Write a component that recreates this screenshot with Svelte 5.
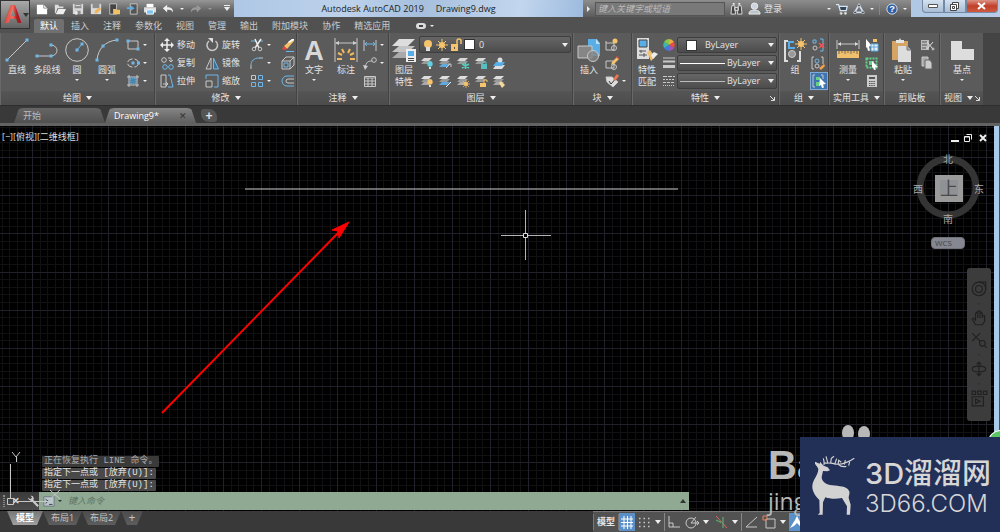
<script>
	const dot = (x, y) =>
		`<rect x="${x - 1.5}" y="${y - 1.5}" width="3" height="3" fill="#6fb7e8" stroke="none"/>`;
	const sheets = (top, low) =>
		`<g stroke="none"><path d="M4 8h8l-3 3H1z" fill="${low}"/><path d="M4 5h8l-3 3H1z" fill="#999"/><path d="M4 2h8L9 5H1z" fill="${top}"/></g>`;

	const icons = {
		line: `<path d="M1 23 22 2"/>${dot(2, 22)}${dot(22, 2)}`,
		polyline: `<path d="M1 18h15M16 7a6 5.5 0 0 1 0 11"/>${dot(2, 18)}${dot(16, 18)}${dot(16, 7)}`,
		circle: `<circle cx="12" cy="12" r="11.3"/><path d="m12 12 5-6" stroke="#6fb7e8"/>${dot(12, 12)}${dot(17, 6)}`,
		arc: `<path d="M2 22C3 11 10 3 22 2"/>${dot(2, 22)}${dot(8, 8)}${dot(22, 2)}`,
		rect: `<path d="M2 3h10v8H2z"/>${dot(2, 3)}${dot(12, 11)}`,
		ellipse: `<ellipse cx="7" cy="7" rx="5.5" ry="4.2" stroke-dasharray="6 2"/>${dot(7, 7)}${dot(12.5, 7)}`,
		hatch: `<path d="M1 3h12M1 11h12M3 1v12M11 1v12"/><path d="M4 4h6v6H4z" fill="#4c86ad" stroke="#6fb7e8" stroke-dasharray="1 1"/>`,
		move: `<path d="M7 2v10M2 7h10" stroke="#eee" stroke-width="1.5"/><path d="m7 0 3 3H4zM7 14l3-3H4zM0 7l3-3v6zM14 7l-3-3v6z" fill="#eee" stroke="none"/>`,
		rotate: `<path d="M10.5 3a5.3 5.3 0 1 1-6.5 0" stroke-width="1.5"/><path d="M3 0h5v5z" fill="#ddd" stroke="none"/>`,
		copy: `<circle cx="4" cy="4" r="2.3"/><path d="M8 2h3v3M9 4l2 2 2-2"/><g stroke="#6fb7e8"><circle cx="5" cy="11" r="2.3"/><circle cx="11" cy="11" r="2.3"/></g>`,
		mirror: `<path d="M6 2v11H1z"/><path d="M8.500 2v11h5z" stroke="#6fb7e8" fill="#3f7196"/>`,
		stretch: `<path d="M1 1h5v12H1zM3 10h5M6 8l2 2-2 2"/><path d="M8 1h2l3 12H8" stroke="#6fb7e8"/>`,
		scale: `<path d="M1 5V1h12v12H9" stroke="#6fb7e8"/><path d="M1 7h6v6H1z"/>`,
		trim: `<path d="M1 3h5M9 3h4" stroke="#6fb7e8"/><path d="m5 1 4 9M11 1 5 10" stroke="#eee" stroke-width="1.5"/><circle cx="4" cy="11" r="1.8"/><circle cx="10" cy="11" r="1.8"/>`,
		fillet: `<path d="M1 13V9M9 2h4"/><path d="M1 9c0-4 3-7 8-7" stroke="#6fb7e8"/>`,
		array: `<g stroke="#6fb7e8"><path d="M8.500 1.500h4v4h-4zM1.500 8.500h4v4h-4zM8.500 8.500h4v4h-4z"/></g><path d="M1.500 1.500h4v4h-4z"/>`,
		erase: `<path d="m3 8 3 3 7-8V1h-2z" fill="#f3c06a" stroke="none"/><path d="m3 8 3 3-2 1-3-1z" fill="#e9453c" stroke="none"/><path d="m7 4 4-3h2v1L8 5z" fill="#fff" stroke="none"/><path d="M5 13.500h8" stroke="#6fb7e8"/>`,
		explode: `<path d="M1 5h8v8H1zM1 5l4-4h8l-4 4M9 13l4-4V1"/><path d="M3 7h4v4H3z" stroke="#6fb7e8"/>`,
		offset: `<path d="M13 2H6a5 5 0 0 0 0 10h7" stroke="#6fb7e8"/><path d="M13 5H7a2 2 0 0 0 0 4h6"/>`,
		text: `<text x="12" y="22" text-anchor="middle" font-family="Liberation Sans" font-size="27" font-weight="bold" fill="#d8d8d8" stroke="none">A</text>`,
		dimension: `<path d="M1 0v24M23 0v24M2 5h20"/><path d="m1 5 4-2v4zM23 5l-4-2v4z" fill="#ccc" stroke="none"/><path d="m4 15 4 2M8 11l2 4M16 11l-2 4M20 15l-4 2M3 21h5M21 21h-5" stroke="#f0b85f" stroke-width="2"/>`,
		linear: `<path d="M1 2v11M13 2v11"/><path d="M2 6h10M4 4 2 6l2 2M10 4l2 2-2 2" stroke="#6fb7e8"/>`,
		leader: `<path d="M2 12C3 6 5 5 9 5"/><circle cx="11" cy="4" r="2.300"/><path d="m0 9 2 5 3-4z" fill="#ccc" stroke="none"/>`,
		table: `<path d="M1.500 2.500h11v10h-11zM1.500 4h11M1.500 7h11M1.500 10h11M5 4v8M9 4v8"/>`,
		layers: `<g stroke="none"><path d="M7 14h16l-7 6H0z" fill="#aaa"/><path d="M7 8h16l-7 6H0z" fill="#c4c4c4"/><path d="M7 1h16l-7 7H0z" fill="#ddd"/><path d="M14 11h10v13H14z" fill="#eee"/><path d="M16 13h6v5h-6z" fill="#58aee8"/><path d="M16 20h6v1h-6zM16 22h6v1h-6z" fill="#444"/></g>`,
		layerOff: `${sheets('#d8d8d8', '#5d5d5d')}<circle cx="10" cy="8" r="2.700" fill="#5fd0e0" stroke="none"/><path d="M9 11h2v2H9z" fill="#ddd" stroke="none"/>`,
		layerIso: `${sheets('#ddd', '#5fa9dd')}<path d="m8 12 4-4M10 8h3v3"/>`,
		layerFreeze: `${sheets('#d8d8d8', '#5d5d5d')}<path d="M9.500 6v7M6 8l7 4M6 12l7-4" stroke="#58cdbd" stroke-width="1.500"/>`,
		layerLock: `${sheets('#d8d8d8', '#5d5d5d')}<path d="M7 8h6v5H7z" fill="#58bfc0" stroke="none"/><path d="M8 8V6h4v2" stroke="#58bfc0"/>`,
		layerMake: `<path d="M4 9h9l-3 4H1z" fill="#ddd" stroke="none"/><path d="M4 6h9l-3 4H1z" fill="#58aee8" stroke="none"/><circle cx="8" cy="4" r="2.500" fill="#ddd" stroke="none"/>`,
		layerOn: `${sheets('#ddd', '#aaa')}<circle cx="10" cy="8" r="2.700" fill="#f4c36b" stroke="none"/><path d="M9 11h2v2H9z" fill="#ddd" stroke="none"/>`,
		layerUniso: `${sheets('#ddd', '#5fa9dd')}<path d="m8 13 5-5" stroke="#eee"/>`,
		layerThaw: `${sheets('#ddd', '#aaa')}<circle cx="10" cy="10" r="2" fill="#f4c36b" stroke="none"/><path d="M10 6v8M6 10h8M7 7l6 6M7 13l6-6" stroke="#f4c36b" stroke-width=".7"/>`,
		layerUnlock: `${sheets('#d8d8d8', '#5d5d5d')}<path d="M6 9h6v4H6z" fill="#f4c36b" stroke="none"/><path d="M10 9V6h3v2" stroke="#f4c36b"/>`,
		layerMatch: `${sheets('#ddd', '#aaa')}<path d="m7 9 2-2 4 4-3 3z" fill="#f4d79a" stroke="none"/>`,
		bulb: `<circle cx="6" cy="5" r="4" fill="#f4c36b" stroke="none"/><path d="M4 8h4v4H4z" fill="#ddd" stroke="none"/>`,
		sun: `<circle cx="6" cy="6" r="3" fill="#f4c36b" stroke="none"/><path d="M6 0v12M0 6h12M2 2l8 8M2 10l8-8" stroke="#f4c36b"/>`,
		unlock: `<path d="M1 5h7v7H1z" fill="#f4c36b" stroke="none"/><path d="M7 5V2a2 2 0 0 1 4 0v3" stroke="#f4c36b" stroke-width="1.500"/><path d="M4 8h1v2H4z" fill="#555" stroke="none"/>`,
		insert: `<path d="M11 1h9l3 4v13H11z" fill="#5aaee6" stroke="none"/><path d="M19 1v5h4" fill="#bde0f8" stroke="none"/><path d="M1 8h14v12H1z" fill="#868686"/><circle cx="16" cy="18" r="5.500" fill="#868686" fill-opacity=".8"/>`,
		blockNew: `<path d="M1 5h8v7H1zM1 3v2"/><circle cx="9" cy="10" r="2.500"/><circle cx="10" cy="3" r="2.500" fill="#f4c36b" stroke="none"/>`,
		blockEdit: `<path d="M1 5h8v7H1z"/><circle cx="9" cy="11" r="2.500"/><path d="m6 9 1-3 5-5 2 2-5 5z" fill="#f4c36b" stroke="none"/><path d="m11 1 1-1 2 2-1 1z" fill="#e9453c" stroke="none"/>`,
		attribute: `<path d="M1 3h6l6 5-5 5-6-5z" fill="#ddd"/><path d="m4 7 2 3 7-8" stroke="#333"/><path d="m8 5 4-5 2 2-4 5z" fill="#ed7455" stroke="none"/>`,
		match: `<path d="M2 0h12v21H2z" fill="#ddd" stroke="none"/><path d="M4 2h8v7H4z" fill="#5aaee6" stroke="#444"/><path d="M4 13h7M4 17h8M6 12v3M9 15v4" stroke="#555"/><path d="m12 14 3-2 5 7-4 4z" fill="#f1c06d" stroke="none"/><path d="m16 17 3-3 4 2-5 5z" fill="#eee" stroke="none"/>`,
		wheel: `<g stroke="none"><path d="M7 7V1a6 6 0 0 1 5 3z" fill="#f5a742"/><path d="m7 7 5-3a6 6 0 0 1 0 6z" fill="#e94e43"/><path d="m7 7 5 3a6 6 0 0 1-5 3z" fill="#a452c2"/><path d="M7 7v6a6 6 0 0 1-5-3z" fill="#4479dc"/><path d="m7 7-5 3a6 6 0 0 1 0-6z" fill="#39b7b0"/><path d="M7 7 2 4a6 6 0 0 1 5-3z" fill="#86c847"/></g>`,
		weights: `<path d="M1 2h12" /><path d="M1 5.500h12" stroke-width="2"/><path d="M1 10.500h12" stroke-width="3"/>`,
		linetypes: `<path d="M1 2.500h12" stroke-dasharray="4 1"/><path d="M1 5.500h12" stroke-dasharray="2 1"/><path d="M1 8.500h12" stroke-dasharray="3 1"/><path d="M1 11.500h12" stroke-dasharray="1 1"/>`,
		group: `<path d="M5 3H2v20h3M14 23h3V13" stroke="#ddd" stroke-width="2"/><path d="M11 4H6v6h6" stroke="#58aee8" stroke-width="2"/><circle cx="9" cy="16" r="3.500" fill="#999"/><circle cx="18" cy="6" r="3" fill="#f4c36b" stroke="none"/><path d="M18 0v12M12 6h12M14 2l8 8M14 10l8-8" stroke="#f4c36b"/>`,
		ungroup: `<path d="M2 2h3v3H2zM9 1h3v12H9" stroke="#6fb7e8"/><circle cx="4" cy="10" r="2"/><path d="m8 5 5 5M13 5l-5 5" stroke="#e55" stroke-width="1.500"/>`,
		groupEdit: `<path d="M3 1H1v12h2M10 1h2v7"/><circle cx="6" cy="5" r="2" stroke="#6fb7e8"/><circle cx="6" cy="10" r="2"/><path d="m8 12 5-4 1 2-4 4z" fill="#f1a14f" stroke="none"/>`,
		groupSelect: `<path d="M3 1H1v12h2M9 1h2v4"/><path d="M4 3h4v3H4zM4 8h3v4H4z" fill="#65d184" stroke="none"/><path d="m8 4 6 6-3 .5 1 3-2 .5-1-3-2 1z" fill="#fff" stroke="none"/>`,
		measure: `<path d="M1 2v9M23 2v9M2 6h20"/><path d="m2 6 3-2v4zM22 6l-3-2v4z" fill="#ddd" stroke="none"/><path d="M1 13h22v7H1z" fill="#f1c06d" stroke="none"/><path d="M3 13v3M6 13v2M9 13v3M12 13v2M15 13v3M18 13v2M21 13v3" stroke="#765"/>`,
		quick: `<path d="m1 1 6 7-3 .5 1 4-2 .5-1-4-1 1z" fill="#fff" stroke="none"/><path d="M6 6h7v7H6z" fill="#eee" stroke="#58aee8"/><path d="M9 6v7M6 9h7" stroke="#58aee8"/><path d="M8 1h4v3H8z" fill="#f4c36b" stroke="none"/>`,
		selectAll: `<path d="M1.500 2.500h10v9h-10z" stroke="#62d48a" stroke-width="2" stroke-dasharray="2 1"/><path d="M4 5h5v4H4z" fill="#62d48a" stroke="none"/><path d="m7 5 6 6-3 .5 1 2-2 .5-1-3-1 1z" fill="#fff" stroke="none"/>`,
		calc: `<path d="M2 1h10v12H2z" fill="#ccc" stroke="none"/><path d="M4 3h6v2H4z" fill="#555" stroke="none"/><path d="M4 7.500h6M4 9.500h6M4 11.500h6" stroke="#555" stroke-dasharray="1.500 .7"/>`,
		paste: `<path d="M1 3h16v19H1z" fill="#d5a465" stroke="none"/><path d="M5 2h3l1-2 1 2h3v3H5z" fill="#e4e4e4" stroke="none"/><path d="M7 8h9l4 4v12H7z" fill="#ddd" stroke="none"/><path d="M16 8v4h4" fill="#aaa" stroke="#777"/>`,
		cut: `<path d="M1 2h8v10H1z" fill="#bbb" stroke="none"/><path d="M2 4h5M2 7h5M2 10h4" stroke="#555"/><path d="m7 4 6 7M13 4l-6 7" stroke="#ddd"/><circle cx="13" cy="11" r="1"/>`,
		copyClip: `<path d="M2 1h6v9H2z" fill="#aaa"/><path d="M5 4h5l2 3v6H5z" fill="#ccc" stroke="#666"/>`,
		base: `<path d="M1 3h11v8h12v11H1z" fill="#ddd" stroke="none"/>`,
		file: `<path d="M1 2h8l4 4v7H1z" fill="#fff" stroke="none"/><path d="M9 2v4h4" stroke="#888"/>`,
		open: `<path d="M1 2h4l1 2h5v2H4l-2 6H1z" fill="#ddd" stroke="none"/><path d="M5 7h9l-3 6H2z" fill="#eee" stroke="none"/>`,
		save: `<path d="M1 1h12v12H1z" fill="#d9d9d9" stroke="none"/><path d="M3 1h8v5H3zM4 9h6v4H4z" fill="#8c8c8c" stroke="none"/><path d="M4 3h6M4 10h2v3H4z" fill="#eee" stroke="#eee"/>`,
		saveAs: `<path d="M1 1h12v12H1z" fill="#d9d9d9" stroke="none"/><path d="M3 1h8v5H3z" fill="#8c8c8c" stroke="none"/><path d="m5 12 1-3 5-4 2 2-5 5z" fill="#f0b354" stroke="none"/>`,
		mobile: `<path d="M2 1h8v12H2z" fill="#444" stroke="#ccc"/><path d="M6 7h3l1 1h4v5H6z" fill="#f0c265" stroke="none"/>`,
		mobileSave: `<path d="M5 1h8v12H5z" fill="#555" stroke="#ccc"/><path d="M1 5h5V3l4 3-4 3V7H1z" fill="#58aee8" stroke="none"/>`,
		print: `<path d="M3 1h8v4H3z" fill="#fff" stroke="none"/><path d="M0 5h14v6H0z" fill="#ddd" stroke="none"/><path d="M3 8h8v5H3z" fill="#7cc2ef" stroke="#fff"/>`,
		undo: `<path d="m1 6 5-4v3c5 0 7 2 7 6-2-3-4-3-7-3v3z" fill="#eee" stroke="none"/>`,
		redo: `<path d="M13 6 8 2v3c-5 0-7 2-7 6 2-3 4-3 7-3v3z" fill="#999" stroke="none"/>`,
		find: `<path d="M2 4h3l1 9H1zM9 4h3l1 9H8zM5 6h4v3H5z" fill="#444" stroke="#ddd"/><path d="M3 2h2M9 2h2" stroke="#eee" stroke-width="2"/>`,
		user: `<circle cx="7" cy="4.500" r="3.500" fill="#ccd4dd" stroke="#eee"/><path d="M1 13c0-4 3-4 6-4s6 0 6 4z" fill="#bbc3cc" stroke="#eee"/>`,
		cart: `<path d="M0 2h3l2 7h7l1-5H4" stroke="#d9e6f5" stroke-width="1.500" fill="#345"/><circle cx="6" cy="12" r="1.300" fill="#eee"/><circle cx="11" cy="12" r="1.300" fill="#eee"/>`,
		share: `<path d="m7 2 5 9H2z" stroke="#cfe0f4" stroke-width="2"/><circle cx="7" cy="3" r="1.500" fill="#345"/><circle cx="2.500" cy="11" r="1.500" fill="#345"/><circle cx="11.500" cy="11" r="1.500" fill="#345"/>`,
		help: `<circle cx="7" cy="7" r="6" fill="#2c5fa8" stroke="#eee"/><text x="7" y="11" text-anchor="middle" font-family="Liberation Sans" font-weight="bold" font-size="11" fill="#fff" stroke="none">?</text>`,
		grid: `<path d="M1 4h12M1 7.500h12M1 11h12M4 1v13M7.500 1v13M11 1v13" stroke="#fff"/>`,
		snap: `<path d="M2 3.500h11M2 7.500h11M2 11.500h11" stroke-width="1.500" stroke-dasharray="1.500 3"/>`,
		ortho: `<path d="M2 1v11h11M2 8h4v4"/>`,
		polar: `<circle cx="6" cy="8" r="5"/><path d="M6 8h7M6 8l5-6M12 6l2 2-2 2"/>`,
		iso: `<path d="m2 1 11 12" stroke="#e06666"/><path d="M2 5 7 7.500M9 2v11" stroke="#58bf72"/>`,
		track: `<path d="M13 2 2 12h11"/>`,
		osnap: `<path d="M4 4h9v9H4z"/><path d="M1 1h4v4H1z" stroke="#e8845c"/>`,
		person: `<path d="m7 1 2 4 5 8-4-2-3-3-3 3-4 2 5-8z" fill="#fff" stroke="none"/>`,
		orbit: `<path d="M7 1v12M5 3l2-2 2 2M5 11l2 2 2-2"/><ellipse cx="7" cy="7" rx="6" ry="2.500"/>`,
		pan: `<path d="M4 13 1 8l1-1 2 2V3l1-1 1 1V1l2 0v2l1-1 1 1v2l2 0v5l-2 3zM6 3v4M8 3v4M10 4v3"/>`,
		zoom: `<path d="m1 1 7 7M8 1 1 8"/><circle cx="10" cy="10" r="2.500"/><path d="m12 12 2 2"/>`,
		steer: `<circle cx="7" cy="7" r="6"/><circle cx="7" cy="7" r="3"/><path d="M7 1h6v6"/>`,
		movie: `<path d="M1 1h3v3H1zM6 1h3v3H6zM11 1h3v3h-3zM1 6h10v8H1z"/><path d="m4 8 4 2-4 2z"/>`,
		wrench: `<path d="m5 5 8 8" stroke="#ccc" stroke-width="2.500"/><path d="M1 3a4 4 0 0 0 6 3 3 3 0 0 0-3-5l2 2-2 2z" fill="#ccc" stroke="none"/>`,
		prompt: `<path d="M1 2h12v11H1z" fill="#b9c3cb" stroke="#6c747b"/><path d="m3 5 3 2-3 3M7 11h4" stroke="#2e3338"/>`
	};

	const quickAccess = [
		['file', '新建'],
		['open', '打开'],
		['save', '保存'],
		['saveAs', '另存为'],
		['mobile', '从移动设备打开'],
		['mobileSave', '保存到移动设备'],
		['print', '打印']
	];
	const menus = ['默认', '插入', '注释', '参数化', '视图', '管理', '输出', '附加模块', '协作', '精选应用'];
	const layerTools = [
		'layerOff', 'layerIso', 'layerFreeze', 'layerLock', 'layerMake',
		'layerOn', 'layerUniso', 'layerThaw', 'layerUnlock', 'layerMatch'
	];
	const history = ['正在恢复执行 LINE 命令。', '指定下一点或 [放弃(U)]:', '指定下一点或 [放弃(U)]:'];

	// drawing grid: a bright line on every fifth step
	const step = 7.63;
	function gridPath(start, vertical, major) {
		let d = '';
		for (let i = 0; i < 400; i++) {
			if ((i % 5 === 0) !== major) continue;
			const p = Math.round(start + i * step) + 0.5;
			d += vertical ? `M${p} 0V3000` : `M0 ${p}H3000`;
		}
		return d;
	}
	const minorGrid = gridPath(-6, true, false) + gridPath(-7, false, false);
	const majorGrid = gridPath(-6, true, true) + gridPath(-7, false, true);

	let activeMenu = $state('默认');
	let command = $state('');
</script>

{#snippet icon(name, size = 14, box = size)}
	<svg width={size} height={size} viewBox="0 0 {box} {box}" fill="none" stroke="#c8c8c8" aria-hidden="true">
		{@html icons[name]}
	</svg>
{/snippet}

{#snippet big(name, label, caret = false, second = '')}
	<button class="big">
		{@render icon(name, 24)}
		<span>{label}</span>
		{#if second}<span>{second}</span>{/if}
		{#if caret}<i class="caret tiny"></i>{/if}
	</button>
{/snippet}

{#snippet small(name, label = '', caret = false)}
	<button class="small" aria-label={label || name}>
		{@render icon(name)}
		{#if label}<span>{label}</span>{/if}
		{#if caret}<i class="caret tiny"></i>{/if}
	</button>
{/snippet}

{#snippet footer(label, caret = true, launcher = false)}
	<footer>
		<span>{label}</span>
		{#if caret}<i class="caret"></i>{/if}
		{#if launcher}
			<svg class="launcher" width="5" height="5" viewBox="0 0 5 5" stroke="#ddd" fill="none"><path d="m0 0 4 4M4.500 1v3.500H1" /></svg>
		{/if}
	</footer>
{/snippet}

<div class="app">
	<header>
		<div class="quick">
			{#each quickAccess as [name, label]}
				<button aria-label={label}>{@render icon(name, 12, 14)}</button>
			{/each}
			<button aria-label="放弃">{@render icon('undo', 12, 14)}</button>
			<i class="caret tiny"></i>
			<button aria-label="重做">{@render icon('redo', 12, 14)}</button>
			<i class="caret tiny dim"></i>
			<i class="caret bar"></i>
		</div>
		<div class="title"><span>Autodesk AutoCAD 2019</span><span>Drawing9.dwg</span></div>
		<div class="info">
			<i class="play"></i>
			<input type="text" placeholder="键入关键字或短语" aria-label="搜索" />
			<button aria-label="查找">{@render icon('find', 13, 14)}</button>
			<button class="login">{@render icon('user', 13, 14)}<span>登录</span></button>
			<i class="caret tiny push"></i>
			<button aria-label="应用商店">{@render icon('cart', 12, 14)}</button>
			<button aria-label="保持连接">{@render icon('share', 12, 14)}</button>
			<i class="caret tiny"></i>
			<button class="help" aria-label="帮助">{@render icon('help', 12, 14)}</button>
			<i class="caret tiny"></i>
		</div>
		<div class="frame">
			<button aria-label="最小化"><svg width="10" height="5" viewBox="0 0 10 5"><path d="M.5.500h9v3h-9z" fill="#fff" stroke="#555" /></svg></button>
			<button aria-label="还原"><svg width="9" height="9" viewBox="0 0 9 9" fill="#fff" stroke="#444"><path d="M2.500.500h6v6h-6z" /><path d="M.500 2.500h6v6h-6zM2.500 4.500h2v2h-2z" /></svg></button>
			<button class="close" aria-label="关闭"><svg width="9" height="8" viewBox="0 0 9 8" stroke="#fff" stroke-width="2"><path d="m1 1 7 6M8 1 1 7" /></svg></button>
		</div>
		<button class="logo" aria-label="应用程序菜单">
			<svg width="20" height="26" viewBox="0 0 20 26">
				<defs><linearGradient id="red" x2="1"><stop offset="0" stop-color="#e5463d" /><stop offset=".5" stop-color="#f06a5d" /><stop offset=".7" stop-color="#a71d1c" /></linearGradient></defs>
				<text x="10" y="21" text-anchor="middle" font-family="Liberation Sans" font-size="26" font-weight="bold" fill="url(#red)">A</text>
			</svg>
			<i class="caret dark"></i>
		</button>
	</header>

	<nav class="menus">
		{#each menus as menu}
			<button class:active={menu === activeMenu} onclick={() => (activeMenu = menu)}>{menu}</button>
		{/each}
		<button class="toggle" aria-label="最小化功能区"><i class="pill"></i><i class="caret tiny"></i></button>
	</nav>

	<div class="ribbon">
		<section class="draw">
			<div class="tools">
				{@render big('line', '直线')}
				{@render big('polyline', '多段线')}
				{@render big('circle', '圆', true)}
				{@render big('arc', '圆弧', true)}
				<div class="stack">
					{@render small('rect', '', true)}
					{@render small('ellipse', '', true)}
					{@render small('hatch', '', true)}
				</div>
			</div>
			{@render footer('绘图')}
		</section>
		<section class="modify">
			<div class="tools">
				<div class="stack">{@render small('move', '移动')}{@render small('copy', '复制')}{@render small('stretch', '拉伸')}</div>
				<div class="stack">{@render small('rotate', '旋转')}{@render small('mirror', '镜像')}{@render small('scale', '缩放')}</div>
				<div class="stack">{@render small('trim', '', true)}{@render small('fillet', '', true)}{@render small('array', '', true)}</div>
				<div class="stack">{@render small('erase')}{@render small('explode')}{@render small('offset')}</div>
			</div>
			{@render footer('修改')}
		</section>
		<section class="annotate">
			<div class="tools">
				{@render big('text', '文字', true)}
				{@render big('dimension', '标注')}
				<div class="stack">{@render small('linear', '', true)}{@render small('leader', '', true)}{@render small('table')}</div>
			</div>
			{@render footer('注释')}
		</section>
		<section class="layer">
			<div class="tools">
				{@render big('layers', '图层', false, '特性')}
				<div class="grow">
					<label class="combo">
						{@render icon('bulb', 12)}{@render icon('sun', 12)}{@render icon('unlock', 12)}
						<i class="swatch"></i>
						<select aria-label="图层"><option>0</option></select>
						<i class="caret"></i>
					</label>
					<div class="matrix">
						{#each layerTools as tool}{@render small(tool)}{/each}
					</div>
				</div>
			</div>
			{@render footer('图层')}
		</section>
		<section class="block">
			<div class="tools">
				{@render big('insert', '插入')}
				<div class="stack">{@render small('blockNew')}{@render small('blockEdit')}{@render small('attribute', '', true)}</div>
			</div>
			{@render footer('块')}
		</section>
		<section class="props">
			<div class="tools">
				{@render big('match', '特性', false, '匹配')}
				<div class="stack">{@render small('wheel')}{@render small('weights')}{@render small('linetypes')}</div>
				<div class="stack grow">
					<label class="combo"><i class="swatch wide"></i><select aria-label="对象颜色"><option>ByLayer</option></select><i class="caret"></i></label>
					<label class="combo"><i class="rule"></i><select aria-label="线宽"><option>ByLayer</option></select><i class="caret"></i></label>
					<label class="combo"><i class="rule thin"></i><select aria-label="线型"><option>ByLayer</option></select><i class="caret"></i></label>
				</div>
			</div>
			{@render footer('特性', true, true)}
		</section>
		<section class="group">
			<div class="tools">
				{@render big('group', '组')}
				<div class="stack">{@render small('ungroup')}{@render small('groupEdit')}<div class="pressed">{@render small('groupSelect')}</div></div>
			</div>
			{@render footer('组')}
		</section>
		<section class="utils">
			<div class="tools">
				{@render big('measure', '测量', true)}
				<div class="stack">{@render small('quick')}{@render small('selectAll')}{@render small('calc')}</div>
			</div>
			{@render footer('实用工具')}
		</section>
		<section class="clip">
			<div class="tools">
				{@render big('paste', '粘贴', true)}
				<div class="stack">{@render small('cut')}{@render small('copyClip')}</div>
			</div>
			{@render footer('剪贴板', false)}
		</section>
		<section class="view">
			<div class="tools">{@render big('base', '基点', true)}</div>
			{@render footer('视图', true, true)}
		</section>
	</div>

	<div class="files">
		<button class="file">开始</button>
		<button class="file current">Drawing9*<span class="x">✕</span></button>
		<button class="plus" aria-label="新图形">+</button>
	</div>

	<main>
		<svg class="drawing" width="100%" height="100%" fill="none">
			<path d={minorGrid} stroke="#111114" />
			<path d={majorGrid} stroke="#20212b" />
			<path d="M245 63h433" stroke="#c9c9c9" />
			<path d="M525.500 84v23M525.500 112v22M501 109.500h22M528 109.500h23" stroke="#b4b4b4" />
			<path d="M523.500 107.500h4v4h-4z" stroke="#ddd" />
			<path d="M162 287 339 106" stroke="#f00" stroke-width="2" />
			<path d="m349 96-17 8 6 1 1 7z" fill="#f00" stroke="#f00" />
		</svg>

		<div class="viewlabel">[−][俯视][二维线框]</div>
		<div class="childframe">
			<svg width="38" height="10" viewBox="0 0 38 10" stroke="#eee" fill="none"><path d="M2 8h8" stroke-width="2" /><path d="M17.500 1.500h5v5M15.500 3.500h5v5h-5zM15.500 4h5" /><path d="m31 2 6 6M37 2l-6 6" stroke-width="2" /></svg>
		</div>

		<svg class="cube" width="82" height="78" viewBox="0 0 82 78" text-anchor="middle">
			<circle cx="40" cy="37" r="28" fill="none" stroke="#343434" stroke-width="7" />
			<path d="M27 25h28v27H27z" fill="#9a9a9a" />
			<path d="M32 30h18v16H32z" fill="#8f9295" />
			<text x="41" y="45" font-size="18" fill="#4a4a4a">上</text>
			<g font-size="10" fill="#a9a9a9">
				<text x="40" y="13">北</text><text x="10" y="43">西</text><text x="71" y="43">东</text><text x="40" y="73">南</text>
			</g>
		</svg>
		<button class="wcs">WCS</button>

		<div class="navbar">
			<button aria-label="控制盘">{@render icon('steer', 17, 15)}</button>
			<i class="caret tiny dark"></i>
			<button aria-label="平移">{@render icon('pan', 17, 15)}</button>
			<button aria-label="缩放">{@render icon('zoom', 17, 15)}</button>
			<i class="caret tiny dark"></i>
			<button aria-label="动态观察">{@render icon('orbit', 17, 15)}</button>
			<i class="caret tiny dark"></i>
			<button aria-label="ShowMotion">{@render icon('movie', 17, 15)}</button>
		</div>

		<div class="history">
			{#each history as row}<span>{row}</span>{/each}
		</div>
		<div class="command">
			<div class="handle"><i class="grip"></i><b>✕</b>{@render icon('wrench', 12, 14)}</div>
			<label for="cmd">{@render icon('prompt', 12, 14)}<i class="caret tiny dark"></i></label>
			<input id="cmd" type="text" placeholder="键入命令" bind:value={command} />
			<i class="caret up"></i>
		</div>
		<svg class="ucs" width="64" height="60" viewBox="0 0 64 60" fill="none" stroke="#c4c8c4">
			<path d="M10.500 13v35M12 1l4 5 4-5M16.500 6v5M7.500 47.500h6v6h-6zM14 50.500h37M50 39l10 9M60 39l-10 9" />
		</svg>
	</main>

	<div class="bottom">
		<div class="layouts">
			<button class="current">模型</button>
			<button>布局1</button>
			<button>布局2</button>
			<button class="add" aria-label="新建布局">+</button>
		</div>
		<div class="status">
			<button class="space">模型</button>
			<button class="on" aria-label="栅格">{@render icon('grid')}</button>
			<button aria-label="捕捉">{@render icon('snap')}</button><i class="caret"></i>
			<button class="split" aria-label="正交">{@render icon('ortho')}</button>
			<button aria-label="极轴">{@render icon('polar')}</button><i class="caret"></i>
			<button aria-label="等轴测">{@render icon('iso')}</button><i class="caret"></i>
			<button class="split" aria-label="对象追踪">{@render icon('track')}</button>
			<button aria-label="对象捕捉">{@render icon('osnap')}</button><i class="caret"></i>
			<button class="on" aria-label="注释可见性">{@render icon('person')}</button>
		</div>
	</div>

	<div class="baidu">
		<svg width="34" height="18" viewBox="0 0 34 18" fill="#b8b8b8"><ellipse cx="8" cy="9" rx="6" ry="8" /><ellipse cx="24" cy="10" rx="6" ry="8" /></svg>
		<strong>Ba</strong>
		<span>jing</span>
	</div>
	<i class="ball"></i>
	<div class="mark">
		<svg width="50" height="62" viewBox="34 54 150 186" fill="#d2d2d2">
			<path d="M46 74l14 6 2-6 4 6 6 6 12 5 7 9-8 3-13-1-4 18c0 14 14 23 32 25 20 3 42 2 50 16 4 8-1 14-1 22l6 20-2 30h-10l1-25-11-18-4-7c-18 4-36 3-50-2l-7 15-1 37H54l6-5-1-39c-12-12-22-26-21-43 2-19 17-30 18-49-1-8-8-11-10-17z" />
			<path d="M73 84c1-8 0-14-2-20M73 78c8 1 16-1 26 1 20 7 38 3 65-15M84 76l-5-18M93 77l2-13 8-6M106 79l5-14M115 83l2-13 8 6M134 83l3-14M150 74l-3 12M116 82c8 8 16 8 24 6" fill="none" stroke="#d2d2d2" stroke-width="3.500" />
		</svg>
		<div><b>3D溜溜网</b><span>3D66.COM</span></div>
	</div>
</div>

<style>
	.app {
		position: relative;
		display: flex;
		flex-direction: column;
		height: 100vh;
		overflow: hidden;
		background: #393939;
		color: #e4e4e4;
		font: 9px/12px 'Open Sans', 'Noto Sans CJK SC', sans-serif;
	}
	:global(body) {
		margin: 0;
	}
	button,
	input,
	select {
		margin: 0;
		padding: 0;
		border: 0;
		background: none;
		color: inherit;
		font: inherit;
	}
	svg {
		display: block;
		flex: none;
		overflow: visible;
	}
	button {
		white-space: nowrap;
	}

	.caret {
		flex: none;
		width: 0;
		border: 3px solid transparent;
		border-top: 4px solid #eee;
		border-bottom: 0;
	}
	.caret.tiny {
		border-width: 2px;
		border-top-width: 2px;
		border-bottom: 0;
	}
	.caret.dark {
		border-top-color: #333;
	}
	.caret.dim {
		border-top-color: #999;
	}
	.caret.bar {
		position: relative;
		margin-left: 6px;
	}
	.caret.bar::before {
		content: '';
		position: absolute;
		left: -3px;
		top: -6px;
		width: 6px;
		height: 1px;
		background: #eee;
	}
	.caret.up {
		border-top: 0;
		border-bottom: 4px solid #333;
	}

	/* title bar */
	header {
		position: relative;
		display: flex;
		height: 17px;
		flex: none;
		background: linear-gradient(100deg, #a9c5e4 20%, #bdd1ea 35%, #a5bfdd 42%, #c2d6ee 52%, #9fbcdf 58%, #b5cbe6);
	}
	.quick,
	.info {
		display: flex;
		align-items: center;
		gap: 6px;
		background: linear-gradient(#969696, #666 60%, #5c5c5c);
	}
	.quick {
		padding: 0 4px 0 36px;
	}
	.title {
		display: flex;
		flex: 1;
		align-items: center;
		justify-content: center;
		gap: 12px;
		color: #222;
		white-space: nowrap;
	}
	.info {
		width: 328px;
		gap: 5px;
		background: linear-gradient(#8d8d8d, #5b5b5b);
	}
	.info input {
		width: 130px;
		height: 14px;
		box-sizing: border-box;
		padding: 0 2px;
		border: 1px solid #555;
		background: #797979;
		font-style: italic;
	}
	.info input::placeholder {
		color: #bbb;
	}
	.play {
		margin-left: 4px;
		border: 3px solid transparent;
		border-left: 3px solid #eee;
		border-right: 0;
	}
	.login {
		display: flex;
		align-items: center;
		gap: 3px;
	}
	.push {
		margin-left: auto;
	}
	.help {
		padding-left: 6px;
		border-left: 1px solid #888;
	}
	.info > :last-child {
		margin-right: 4px;
	}
	.frame {
		display: flex;
		width: 76px;
		height: 13px;
		padding: 0 2px 0 11px;
	}
	.frame button {
		display: grid;
		place-items: center;
		flex: 22;
		border: 1px solid #7489a3;
		border-top: 0;
		background: linear-gradient(#d4e1f0, #a9bdd5);
	}
	.frame button:first-child {
		border-bottom-left-radius: 4px;
	}
	.frame .close {
		flex: 34;
		border-bottom-right-radius: 4px;
		background: linear-gradient(#dc9385, #c0402a 50%, #cf5a40);
	}
	.logo {
		position: absolute;
		left: 0;
		top: 0;
		z-index: 1;
		display: flex;
		align-items: center;
		width: 30px;
		height: 29px;
		padding: 0 0 0 2px;
		border: 1px solid #333;
		background: linear-gradient(#a9a9a9, #636363);
	}

	/* ribbon tabs */
	.menus {
		display: flex;
		height: 16px;
		flex: none;
		align-items: flex-end;
		padding-left: 34px;
		background: #515151;
	}
	.menus button {
		height: 14px;
		padding: 0 7px;
		color: #ccc;
	}
	.menus .active {
		padding: 0 6px;
		border-radius: 2px 2px 0 0;
		background: #707070;
		color: #fff;
	}
	.menus .toggle {
		display: flex;
		align-items: center;
		gap: 4px;
		margin-left: 12px;
	}
	.pill {
		width: 4px;
		height: 2px;
		border: solid #ddd;
		border-width: 2px 3px;
		border-radius: 3px;
		background: #444;
	}

	/* ribbon */
	.ribbon {
		display: flex;
		height: 73px;
		flex: none;
		background: #444;
		border-bottom: 1px solid #2e2e2e;
		box-sizing: border-box;
	}
	section {
		display: flex;
		flex-direction: column;
		flex: none;
		box-sizing: border-box;
		border-right: 1px solid #444;
		border-left: 1px solid #686868;
		background: #5b5b5b;
	}
	.draw {
		width: 155px;
	}
	.modify {
		width: 142px;
	}
	.annotate {
		width: 92px;
	}
	.layer {
		width: 184px;
	}
	.block {
		width: 59px;
	}
	.props {
		width: 147px;
	}
	.group {
		width: 50px;
	}
	.utils {
		width: 55px;
	}
	.clip {
		width: 56px;
	}
	.view {
		width: 44px;
	}
	.tools {
		display: flex;
		flex: 1;
		gap: 2px;
		padding: 3px 1px 0;
	}
	.draw .tools {
		gap: 0;
	}
	.modify .tools {
		padding-left: 4px;
		gap: 10px;
	}
	.view .tools {
		padding-left: 6px;
	}
	.clip .tools,
	.utils .tools {
		padding-left: 3px;
	}
	.layer .tools,
	.block .tools,
	.props .tools {
		gap: 1px;
		padding-left: 0;
	}
	section footer {
		position: relative;
		display: flex;
		align-items: center;
		justify-content: center;
		gap: 5px;
		height: 14px;
		background: linear-gradient(#555, #4c4c4c);
	}
	.launcher {
		position: absolute;
		right: 3px;
	}
	.view footer {
		justify-content: flex-start;
		padding-left: 3px;
	}
	.big {
		display: flex;
		flex-direction: column;
		align-items: center;
		width: 30px;
		padding-top: 2px;
	}
	.layer .big,
	.props .big {
		width: 28px;
	}
	.big svg {
		margin-bottom: 2px;
	}
	.big .caret {
		margin-top: 3px;
	}
	.stack {
		display: grid;
		grid-template-rows: repeat(3, 18px);
		align-items: center;
	}
	.stack.grow {
		grid-template-columns: minmax(0, 1fr);
	}
	.small {
		display: flex;
		align-items: center;
		gap: 3px;
	}
	.draw .stack {
		margin-left: 4px;
	}
	.pressed {
		padding: 1px;
		background: #3f76b0;
		box-shadow: 0 0 0 1px #7fa9d6;
	}
	.grow {
		flex: 1;
		min-width: 0;
	}
	.combo {
		display: flex;
		align-items: center;
		gap: 2px;
		height: 14px;
		padding: 0 2px;
		border: 1px solid #3e3e3e;
		border-radius: 2px;
		background: linear-gradient(#666, #4c4c4c);
	}
	.combo select {
		flex: 1;
		min-width: 0;
		appearance: none;
	}
	.combo option {
		color: #222;
	}
	.swatch {
		width: 9px;
		height: 9px;
		border: 1px solid #333;
		background: #fff;
	}
	.swatch.wide {
		margin: 0 6px;
	}
	.rule {
		width: 45px;
		height: 1px;
		background: #fff;
	}
	.rule.thin {
		background: #bbb;
	}
	.matrix {
		display: grid;
		grid-template-columns: repeat(5, 18px);
		grid-template-rows: repeat(2, 18px);
		padding: 1px 0 0 1px;
	}
	.layer .combo {
		height: 15px;
	}
	.layer select {
		padding-left: 2px;
	}

	/* file tabs */
	.files {
		display: flex;
		height: 15px;
		flex: none;
		align-items: stretch;
		padding: 2px 0 0 14px;
		border-bottom: 3px solid #626262;
		background: #393939;
	}
	.file {
		display: flex;
		align-items: center;
		width: 91px;
		padding-left: 9px;
		border-radius: 9px 9px 0 0;
		background: linear-gradient(#666, #505050);
		color: #bbb;
		clip-path: polygon(0 100%, 5px 0, calc(100% - 5px) 0, 100% 100%);
	}
	.file.current {
		padding-right: 9px;
		background: linear-gradient(#858585, #5e5e5e);
		color: #fff;
	}
	.x {
		margin-left: auto;
		color: #333;
	}
	.plus {
		width: 16px;
		margin: 1px 5px;
		border-radius: 3px 8px 3px 8px;
		background: #555;
		font: bold 12px/12px 'Liberation Sans', sans-serif;
	}

	/* drawing area */
	main {
		position: relative;
		flex: 1;
		min-height: 0;
		border-right: 1px solid #16606c;
		background: #000;
		box-shadow: inset -5px 0 #a9cbe9;
	}
	.drawing {
		position: absolute;
		inset: 0;
		width: calc(100% - 5px);
		overflow: hidden;
	}
	.viewlabel {
		position: absolute;
		left: 2px;
		top: 5px;
		color: #ddd;
	}
	.childframe {
		position: absolute;
		right: 12px;
		top: 7px;
	}
	.cube {
		position: absolute;
		right: 9px;
		top: 24px;
	}
	.wcs {
		position: absolute;
		right: 34px;
		top: 111px;
		width: 34px;
		height: 12px;
		padding-left: 3px;
		border: 1px solid #70727c;
		border-radius: 4px;
		background: #858791;
		color: #444;
		font-size: 8px;
		line-height: 10px;
		text-align: left;
	}
	.navbar {
		position: absolute;
		right: 8px;
		top: 142px;
		display: flex;
		flex-direction: column;
		align-items: center;
		gap: 5px;
		width: 24px;
		padding: 13px 0 14px;
		border-radius: 3px;
		background: #3c3c3c;
	}
	.navbar svg {
		stroke: #202020;
	}
	.history {
		position: absolute;
		left: 42px;
		bottom: 20px;
		display: flex;
		flex-direction: column;
		align-items: flex-start;
		gap: 1px;
		font-family: 'Liberation Mono', 'Noto Sans CJK SC', monospace;
		line-height: 11px;
	}
	.history span {
		padding: 0 2px;
		border-radius: 1px;
		background: #494949;
		white-space: pre;
	}
	.history span:first-child {
		background: #3a3a3a;
		color: #aaa;
	}
	.command {
		position: absolute;
		left: 0;
		bottom: 1px;
		display: flex;
		align-items: center;
		width: 69%;
		height: 18px;
		background: #8fa993;
	}
	.handle {
		display: flex;
		align-items: center;
		gap: 7px;
		width: 36px;
		height: 18px;
		padding-left: 3px;
		background: linear-gradient(#3a3a3a, #4c4c4c);
	}
	.grip {
		width: 2px;
		height: 12px;
		border: dotted #888;
		border-width: 0 1px;
	}
	.command label {
		display: flex;
		align-items: center;
		gap: 3px;
		padding-left: 4px;
	}
	.command input {
		flex: 1;
		padding-left: 6px;
		color: #222;
	}
	.command input::placeholder {
		color: #5f7263;
		font-style: italic;
	}
	.command > .up {
		margin-right: 3px;
	}
	.ucs {
		position: absolute;
		left: 0;
		bottom: 0;
	}

	/* layout tabs and status bar */
	.bottom {
		display: flex;
		height: 21px;
		flex: none;
		justify-content: space-between;
	}
	.layouts {
		display: flex;
		height: 14px;
		padding-left: 7px;
	}
	.layouts button {
		width: 39px;
		background: linear-gradient(#4c4c4c, #5d5d5d);
		color: #c5c5c5;
		clip-path: polygon(0 0, 100% 0, calc(100% - 6px) 100%, 6px 100%);
	}
	.layouts .current {
		width: 36px;
		background: linear-gradient(#777, #a0a0a0);
		color: #fff;
		font-weight: bold;
	}
	.layouts .add {
		width: 22px;
		font-size: 12px;
	}
	.status {
		display: flex;
		width: 407px;
		align-items: center;
		border-top: 1px solid #777;
		box-sizing: border-box;
		background: #525252;
	}
	.status button {
		padding: 2px;
	}
	.status .caret {
		margin: 0 3px 0 2px;
	}
	.status .space {
		padding: 2px 3px;
		border: solid #777;
		border-width: 0 1px;
		font-weight: bold;
	}
	.status .on {
		padding: 2px 1px;
		background: #5b8fc7;
	}
	.status .split {
		border-left: 1px solid #888;
	}

	/* overlays */
	.baidu {
		position: absolute;
		right: 190px;
		bottom: 18px;
		display: flex;
		flex-direction: column;
		width: 42px;
		color: #b8b8b8;
	}
	.baidu svg {
		align-self: flex-end;
		margin-right: -64px;
	}
	.baidu strong {
		font: bold 40px/46px 'Liberation Sans', sans-serif;
	}
	.baidu span {
		font-size: 23px;
		line-height: 26px;
	}
	.ball {
		position: absolute;
		right: -14px;
		bottom: 78px;
		width: 24px;
		height: 22px;
		border: 1px solid #fff;
		border-radius: 50%;
		background: #58c865;
	}
	.mark {
		position: absolute;
		right: 0;
		bottom: 0;
		display: flex;
		gap: 4px;
		width: 189px;
		height: 77px;
		padding: 18px 0 0 11px;
		background: #222f57;
		color: #d6d6d6;
	}
	.mark div {
		display: flex;
		flex-direction: column;
	}
	.mark b {
		font: 500 29px/38px Inter, 'Noto Sans CJK SC', sans-serif;
	}
	.mark span {
		font: 300 24px/22px Inter, sans-serif;
	}
</style>
